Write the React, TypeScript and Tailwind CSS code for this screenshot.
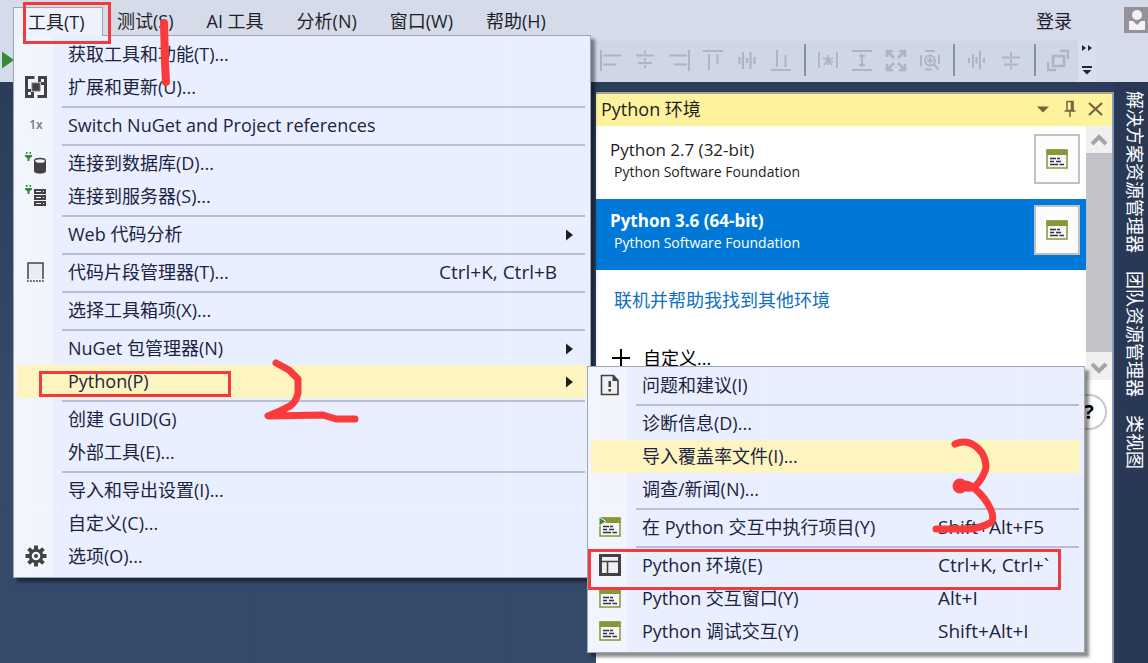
import React from "react";

type MenuEntry = {
  label: string;
  icon?: React.ReactNode;
  shortcut?: string;
  highlight?: boolean;
  children?: MenuGroup[];
};
type MenuGroup = MenuEntry[];

/* ---------- icons ---------- */

function ExtensionsIcon() {
  return (
    <svg width="22" height="22" viewBox="0 0 22 22" fill="none" stroke="#424242" strokeWidth="3">
      <path d="M9.500 1.500h-8v13H6M7.500 16v4.500h-6V14M12.500 20.500h8v-13H16M14.500 6V1.500h6V8" />
      <rect x="7" y="7" width="8" height="8" fill="#424242" stroke="#77777d" strokeWidth="1" />
    </svg>
  );
}

function PlugMark() {
  return (
    <g fill="#388a34">
      <path d="M0 3h7v1.5L4.5 6.5V9h-2V6.500L0 4.500z" />
      <rect x="1" y="0" width="1.500" height="2" />
      <rect x="4.500" y="0" width="1.500" height="2" />
    </g>
  );
}

function DatabaseIcon() {
  return (
    <svg width="22" height="22" viewBox="0 0 22 22">
      <PlugMark />
      <path d="M9 9v10c0 3.500 12 3.500 12 0V9z" fill="#424242" />
      <ellipse cx="15" cy="9" rx="5.500" ry="2.500" fill="#f2f4fe" stroke="#424242" strokeWidth="1.300" />
    </svg>
  );
}

function ServerIcon() {
  return (
    <svg width="22" height="22" viewBox="0 0 22 22">
      <PlugMark />
      {[4, 10, 16].map((y) => (
        <g key={y}>
          <rect x="9" y={y} width="12" height="5" fill="#424242" />
          <rect x="11" y={y + 2} width="5" height="1" fill="#f2f4fe" />
          <rect x="18" y={y + 2} width="1" height="1" fill="#f2f4fe" />
        </g>
      ))}
    </svg>
  );
}

function SnippetIcon() {
  return (
    <svg width="18" height="22" viewBox="0 0 18 22" fill="none" stroke="#424242">
      <path d="M1 18V2h15v16" strokeWidth="1.500" fill="#eceaf6" />
      <path d="M0 20h18" strokeWidth="1.500" strokeDasharray="1.800 1.200" />
    </svg>
  );
}

function GearIcon() {
  return (
    <svg width="22" height="22" viewBox="0 0 22 22">
      <g fill="#424242">
        {[0, 45, 90, 135, 180, 225, 270, 315].map((a) => (
          <rect key={a} x="9" y="0.500" width="4" height="5" transform={`rotate(${a} 11 11)`} />
        ))}
      </g>
      <circle cx="11" cy="11" r="5.800" fill="#f2f4fe" stroke="#424242" strokeWidth="3" />
      <circle cx="11" cy="11" r="2" fill="#424242" />
    </svg>
  );
}

function ReportIcon() {
  return (
    <svg width="20" height="22" viewBox="0 0 20 22">
      <path d="M1.500 1.500h12l4.500 5v14H1.500z" fill="#f0eff1" stroke="#424242" strokeWidth="1.600" />
      <path d="M12.500 1l6 6h-6z" fill="#424242" />
      <rect x="8.500" y="7" width="2.500" height="6" fill="#424242" />
      <rect x="8.500" y="15" width="2.500" height="2.500" fill="#424242" />
    </svg>
  );
}

function WindowIcon({ run = false }: { run?: boolean }) {
  return (
    <svg width="22" height="20" viewBox="0 0 22 20">
      <rect x="1" y="1" width="20" height="18" fill="#f6f6fb" stroke="#879636" strokeWidth="1.500" />
      <rect x="0.500" y="0.500" width="21" height="5.500" fill="#879636" />
      <path d="M4 9.500h6M11 9.500h3M4 12.500h4M10 12.500h5M4 15.500h8M13.500 15.500H18" stroke="#35354a" strokeWidth="1.500" />
      {run && <path d="M0 0l7 4.500L0 9z" fill="#388a34" stroke="#f2f4fe" />}
    </svg>
  );
}

function LayoutIcon() {
  return (
    <svg width="22" height="22" viewBox="0 0 22 22" fill="none" stroke="#424242">
      <rect x="1.500" y="1.500" width="19" height="19" strokeWidth="3" fill="#f0eff1" />
      <path d="M2 7.500h18M8.500 8v12" strokeWidth="1.600" />
    </svg>
  );
}

/* ---------- menus ---------- */

const pythonMenu: MenuGroup[] = [
  [{ label: "问题和建议(I)", icon: <ReportIcon /> }],
  [
    { label: "诊断信息(D)..." },
    { label: "导入覆盖率文件(I)...", highlight: true },
    { label: "调查/新闻(N)..." },
  ],
  [{ label: "在 Python 交互中执行项目(Y)", icon: <WindowIcon run />, shortcut: "Shift+Alt+F5" }],
  [
    { label: "Python 环境(E)", icon: <LayoutIcon />, shortcut: "Ctrl+K, Ctrl+`" },
    { label: "Python 交互窗口(Y)", icon: <WindowIcon />, shortcut: "Alt+I" },
    { label: "Python 调试交互(Y)", icon: <WindowIcon />, shortcut: "Shift+Alt+I" },
  ],
];

const toolsMenu: MenuGroup[] = [
  [{ label: "获取工具和功能(T)..." }, { label: "扩展和更新(U)...", icon: <ExtensionsIcon /> }],
  [
    {
      label: "Switch NuGet and Project references",
      icon: <span className="text-xs font-semibold text-[#777777]">1x</span>,
    },
  ],
  [
    { label: "连接到数据库(D)...", icon: <DatabaseIcon /> },
    { label: "连接到服务器(S)...", icon: <ServerIcon /> },
  ],
  [{ label: "Web 代码分析", children: [] }],
  [{ label: "代码片段管理器(T)...", icon: <SnippetIcon />, shortcut: "Ctrl+K, Ctrl+B" }],
  [{ label: "选择工具箱项(X)..." }],
  [
    { label: "NuGet 包管理器(N)", children: [] },
    { label: "Python(P)", highlight: true, children: pythonMenu },
  ],
  [{ label: "创建 GUID(G)" }, { label: "外部工具(E)..." }],
  [
    { label: "导入和导出设置(I)..." },
    { label: "自定义(C)..." },
    { label: "选项(O)...", icon: <GearIcon /> },
  ],
];

function MenuRow({ entry, shortcutWidth }: { entry: MenuEntry; shortcutWidth: string }) {
  return (
    <div className="relative pr-1 pl-[3px]">
      <button
        type="button"
        className={`flex h-[33px] w-full items-center pb-0.5 text-left ${
          entry.highlight ? "bg-[#fdf4bf]" : ""
        }`}
      >
        <span className="flex w-[38px] shrink-0 items-center justify-center">{entry.icon}</span>
        <span className="ml-[13px] flex-1">{entry.label}</span>
        {entry.shortcut && <span className={`shrink-0 text-[19px] ${shortcutWidth}`}>{entry.shortcut}</span>}
        {entry.children && (
          <svg width="8" height="12" viewBox="0 0 8 12" className="mt-0.5 mr-3">
            <path d="M0 0.500v11L7 6z" fill="#1e1e1e" />
          </svg>
        )}
      </button>
      {entry.children && entry.children.length > 0 && (
        <div className="absolute top-px left-[573px] z-10 w-[498px]">
          <MenuPanel groups={entry.children} shortcutWidth="w-[142px]" />
        </div>
      )}
    </div>
  );
}

function MenuPanel({ groups, shortcutWidth }: { groups: MenuGroup[]; shortcutWidth: string }) {
  return (
    <div className="border border-[#9ba7b7] bg-linear-to-r from-[#f2f5fe] from-[39px] to-[#eaefff] to-[39px] pt-0.5 pb-1 text-[#1b2440] shadow-[4px_4px_3px_rgba(0,0,0,0.45)]">
      {groups.map((group, i) => (
        <div key={i}>
          {i > 0 && (
            <div className="flex h-[5px] items-center pr-[5px] pl-12">
              <hr className="w-full border-t-2 border-[#b9bed2]" />
            </div>
          )}
          {group.map((entry) => (
            <MenuRow key={entry.label} entry={entry} shortcutWidth={shortcutWidth} />
          ))}
        </div>
      ))}
    </div>
  );
}

function MenuBar() {
  return (
    <nav className="relative z-20 flex h-[41px] shrink-0 items-start bg-[#d6dbe9] pl-[13px] text-[#1e1e2a]">
      <div className="relative mt-[7px] mr-[14px]">
        <button
          type="button"
          className="relative z-10 h-[29px] w-[90px] border border-b-0 border-[#9ba7b7] bg-[#eef1fe] pl-[14px] text-left"
        >
          工具(T)
        </button>
        <div className="absolute top-7 left-0 w-[578px]">
          <MenuPanel groups={toolsMenu} shortcutWidth="w-[147px]" />
        </div>
      </div>
      <div className="flex h-[42px] items-center gap-[33px]">
        {["测试(S)", "AI 工具", "分析(N)", "窗口(W)", "帮助(H)"].map((t) => (
          <button key={t} type="button">
            {t}
          </button>
        ))}
      </div>
      <div className="ml-auto flex h-[42px] items-center">
        <button type="button">登录</button>
        <button type="button" aria-label="账户" className="mb-0.5 ml-[52px] h-[26px] w-6 overflow-hidden bg-[#929298]">
          <svg width="24" height="26" viewBox="0 0 24 26" fill="#f3f3f5">
            <circle cx="13" cy="8" r="5" />
            <path d="M5 14h4l4 4 4-4h4v9H5z" />
          </svg>
        </button>
      </div>
    </nav>
  );
}

/* ---------- toolbar ---------- */

const toolbarGroups: { name: string; art: React.ReactNode }[][] = [
  [
    { name: "左对齐", art: <path d="M1 1v21M3 6.500h18M3 15.500h13" /> },
    { name: "居中对齐", art: <path d="M2 6.500h18M4 14h14M11 2v3M11 9v3M11 16v3" /> },
    { name: "右对齐", art: <path d="M21 1v21M1 6.500h18M6 15.500h13" /> },
    { name: "顶端对齐", art: <path d="M1 2h20M7 5v16M15.500 5v10" /> },
    { name: "中间对齐", art: <path d="M7 3v17M14.500 3v17M3.500 8v7M11 9v5M18.500 8v7" strokeWidth="2.200" /> },
    { name: "底端对齐", art: <path d="M1 21h20M7 1v17M15.500 6v12" /> },
  ],
  [
    { name: "使宽度相同", art: <path d="M2 3v16M20 3v16M11 6v10M6 9l10 4M6 9.500h10M11 11l-4 5M11 11l4 5" strokeWidth="1.700" /> },
    { name: "使高度相同", art: <path d="M1 2h20M1 21h20M11 5v13M8 7h6M8 16h6" /> },
    {
      name: "使大小相同",
      art: <path d="M2 8V2h6M14 2h6v6M20 15v6h-6M8 21H2v-6M2 2l7 7M20 2l-7 7M20 21l-7-7M2 21l7-7" strokeWidth="2.600" />,
    },
    {
      name: "按网格调整大小",
      art: (
        <>
          <path d="M2 6v11M20 6v9M6 2h10M6 20.500h7M14.500 15l5 5.500M11 8.500v6M8 11.500h6" />
          <circle cx="11" cy="11.500" r="5" />
        </>
      ),
    },
  ],
  [
    { name: "水平间距", art: <path d="M7 5v14M14 2v18M3 9v5M10.500 8v7M18 9v5" /> },
    { name: "垂直间距", art: <path d="M2 8.500h18M4 15.500h14M11 3v4M11 10v4M11 17v3" /> },
  ],
  [
    {
      name: "置于顶层",
      art: <path d="M6 7h11v10H6zM13 2h8v8M1 13v8h8" strokeWidth="2.600" />,
    },
  ],
];

function Toolbar() {
  return (
    <div className="flex h-[41px] shrink-0 bg-[#d6dbe9]">
      <button type="button" aria-label="启动" className="pb-1 pl-0.5">
        <svg width="12" height="18" viewBox="0 0 12 18">
          <path d="M0 0.500v17L12 9z" fill="#388a34" />
        </svg>
      </button>
      <div className="mr-[52px] ml-auto flex">
        <div className="flex items-center bg-[#cfd6e5] pr-[3px] pb-[3px]">
          {toolbarGroups.map((group, i) => (
            <React.Fragment key={i}>
              {i > 0 && (
                <div className="flex w-[13px] justify-center">
                  <div className="h-8 w-0.5 bg-[#8591a6]" />
                </div>
              )}
              {group.map((tool) => (
                <button
                  key={tool.name}
                  type="button"
                  aria-label={tool.name}
                  className="flex w-[34px] shrink-0 justify-center"
                >
                  <svg width="22" height="23" viewBox="0 0 22 23" fill="none" stroke="#afb4c0" strokeWidth="2">
                    {tool.art}
                  </svg>
                </button>
              ))}
            </React.Fragment>
          ))}
        </div>
        <button type="button" aria-label="工具栏选项" className="flex w-[18px] items-center justify-center bg-[#dce0ec] pb-1">
          <svg width="12" height="30" viewBox="0 0 12 30" fill="#1b293e">
            <path d="M1 0l4 3-4 3zM7 0l4 3-4 3zM1 21h10v2H1zM1.500 25h9L6 29.500z" />
          </svg>
        </button>
      </div>
    </div>
  );
}

/* ---------- Python environments ---------- */

function Environment({ name, selected = false }: { name: string; selected?: boolean }) {
  return (
    <li
      className={`flex h-[71px] items-start justify-between pr-1.5 pl-[14px] ${
        selected ? "bg-[#0078d7] text-white" : "text-[#1e1e1e]"
      }`}
    >
      <div className="pt-[11px]">
        <p className={`text-[17px] leading-[22px] ${selected ? "font-bold" : ""}`}>{name}</p>
        <p className="pl-1 text-sm leading-[22px]">Python Software Foundation</p>
      </div>
      <button
        type="button"
        aria-label={`打开 ${name} 交互窗口`}
        className="mt-1.5 flex h-[50px] w-[46px] items-center justify-center border-2 border-[#c0c0cc] bg-[#fcfcfd]"
      >
        <WindowIcon />
      </button>
    </li>
  );
}

function ScrollBar() {
  return (
    <div className="flex h-[254px] w-[26px] shrink-0 flex-col bg-[#f0f0f0]">
      <svg width="26" height="27" viewBox="0 0 26 27" fill="none" stroke="#a3a3a8" strokeWidth="4">
        <path d="M6 18l7-7 7 7" />
      </svg>
      <div className="flex-1 bg-[#c2c3c9]" />
      <svg width="26" height="28" viewBox="0 0 26 28" fill="none" stroke="#a3a3a8" strokeWidth="4">
        <path d="M6 12l7 7 7-7" />
      </svg>
    </div>
  );
}

function EnvironmentsPanel() {
  return (
    <section className="flex w-[518px] shrink-0 flex-col border-r-2 border-[#8e9bbc] bg-white">
      <header className="flex h-[34px] shrink-0 items-center border-t-2 border-[#a9a48c] bg-[#fff29d] pr-[9px] pb-0.5 pl-[5px] text-[#1e1e1e]">
        <h2 className="flex-1">Python 环境</h2>
        <button type="button" aria-label="窗口位置" className="mr-[15px]">
          <svg width="12" height="7" viewBox="0 0 12 7">
            <path d="M0 0.500h12L6 6.500z" fill="#75633d" />
          </svg>
        </button>
        <button type="button" aria-label="自动隐藏" className="mr-3">
          <svg width="12" height="18" viewBox="0 0 12 18" fill="none" stroke="#75633d" strokeWidth="1.500">
            <path d="M3 1.500h6v9H3zM0.500 11h11M6 11v6" />
            <path d="M8 2v9" strokeWidth="2.500" />
          </svg>
        </button>
        <button type="button" aria-label="关闭">
          <svg width="15" height="14" viewBox="0 0 15 14" fill="none" stroke="#75633d" strokeWidth="2.200">
            <path d="M1 1l13 12M14 1L1 13" />
          </svg>
        </button>
      </header>
      <div className="flex">
        <div className="min-w-0 flex-1 pt-0.5">
          <ul className="flex flex-col">
            <Environment name="Python 2.7 (32-bit)" />
            <Environment name="Python 3.6 (64-bit)" selected />
          </ul>
          <a href="#more" className="mt-4 ml-[18px] block leading-7 text-[#0e70c0]">
            联机并帮助我找到其他环境
          </a>
          <button type="button" className="mt-[30px] ml-[15px] flex items-center gap-3 leading-7 text-black">
            <svg width="20" height="20" viewBox="0 0 20 20" stroke="#000" strokeWidth="2">
              <path d="M10 1v18M1 10h18" />
            </svg>
            自定义...
          </button>
        </div>
        <ScrollBar />
      </div>
      <button
        type="button"
        aria-label="帮助"
        className="mt-[14px] mr-[5px] flex size-9 items-center justify-center self-end rounded-full border-2 border-[#c8c8cf] text-xl font-bold text-black"
      >
        ?
      </button>
    </section>
  );
}

/* ---------- hand-drawn marks ---------- */

function Marks() {
  return (
    <svg
      className="pointer-events-none absolute top-0 left-0 z-30"
      width="1148"
      height="663"
      viewBox="0 0 1148 663"
      fill="none"
      stroke="#f03a3c"
      strokeLinecap="round"
      strokeLinejoin="round"
    >
      <g strokeWidth="3" strokeLinejoin="miter">
        <rect x="24.500" y="3.500" width="85" height="39" />
        <rect x="40.500" y="372.500" width="189" height="23" />
        <rect x="589.500" y="550.500" width="470" height="38" />
      </g>
      <g stroke="#fb3a3c" strokeWidth="7">
        <path d="M164 23l1 40 1 19" strokeWidth="8" />
        <path d="M276 363l13 7 9 9v14q-2 9-8 13l-10 5-12 5 55-1 13 4h19" />
        <path d="M955 444q9-4 17 0 13 7 14 22 0 6-7 16-5 7-12 6-8 0-7-3 7-3 14 3 12 10 17 22 4 10-1 13-10 5-20 6h-34" />
        <circle cx="960" cy="486" r="4" />
      </g>
    </svg>
  );
}

export default function App() {
  return (
    <div className="relative flex min-h-screen flex-col overflow-hidden bg-linear-to-b from-[#293955] to-[#35496a] to-60% font-['Open_Sans','Noto_Sans_CJK_SC',sans-serif] text-lg leading-6 whitespace-nowrap">
      <MenuBar />
      <Toolbar />
      <main className="flex flex-1 pt-2.5">
        <div className="flex-1" />
        <EnvironmentsPanel />
        <aside className="-mt-2.5 flex w-[34px] shrink-0 flex-col items-center gap-[18px] bg-[#293955] pt-[9px] pl-2 text-white">
          {["解决方案资源管理器", "团队资源管理器", "类视图"].map((t) => (
            <button key={t} type="button" className="[text-orientation:sideways] [writing-mode:vertical-rl]">
              {t}
            </button>
          ))}
        </aside>
      </main>
      <Marks />
    </div>
  );
}
